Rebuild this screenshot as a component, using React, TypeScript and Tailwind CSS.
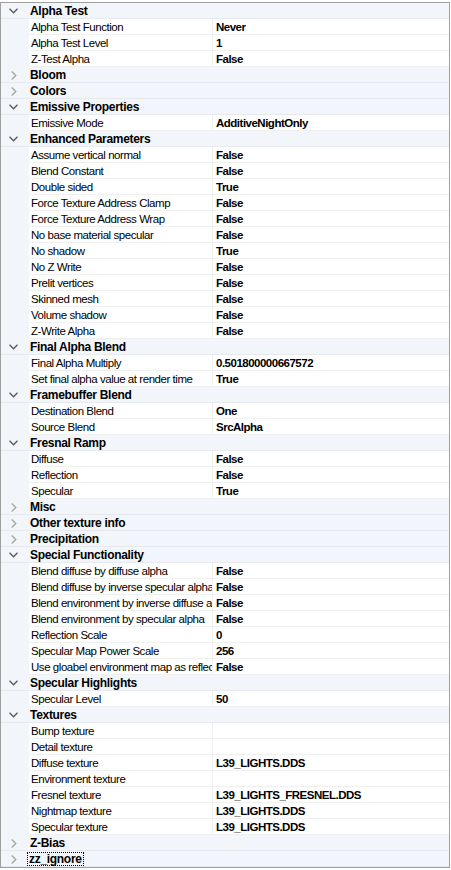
type Prop = [string, string];
type Cat = { name: string; open: boolean; props?: Prop[]; focus?: boolean };

const cats: Cat[] = [
  {
    name: "Alpha Test",
    open: true,
    props: [
      ["Alpha Test Function", "Never"],
      ["Alpha Test Level", "1"],
      ["Z-Test Alpha", "False"],
    ],
  },
  { name: "Bloom", open: false },
  { name: "Colors", open: false },
  {
    name: "Emissive Properties",
    open: true,
    props: [["Emissive Mode", "AdditiveNightOnly"]],
  },
  {
    name: "Enhanced Parameters",
    open: true,
    props: [
      ["Assume vertical normal", "False"],
      ["Blend Constant", "False"],
      ["Double sided", "True"],
      ["Force Texture Address Clamp", "False"],
      ["Force Texture Address Wrap", "False"],
      ["No base material specular", "False"],
      ["No shadow", "True"],
      ["No Z Write", "False"],
      ["Prelit vertices", "False"],
      ["Skinned mesh", "False"],
      ["Volume shadow", "False"],
      ["Z-Write Alpha", "False"],
    ],
  },
  {
    name: "Final Alpha Blend",
    open: true,
    props: [
      ["Final Alpha Multiply", "0.501800000667572"],
      ["Set final alpha value at render time", "True"],
    ],
  },
  {
    name: "Framebuffer Blend",
    open: true,
    props: [
      ["Destination Blend", "One"],
      ["Source Blend", "SrcAlpha"],
    ],
  },
  {
    name: "Fresnal Ramp",
    open: true,
    props: [
      ["Diffuse", "False"],
      ["Reflection", "False"],
      ["Specular", "True"],
    ],
  },
  { name: "Misc", open: false },
  { name: "Other texture info", open: false },
  { name: "Precipitation", open: false },
  {
    name: "Special Functionality",
    open: true,
    props: [
      ["Blend diffuse by diffuse alpha", "False"],
      ["Blend diffuse by inverse specular alpha", "False"],
      ["Blend environment by inverse diffuse a", "False"],
      ["Blend environment by specular alpha", "False"],
      ["Reflection Scale", "0"],
      ["Specular Map Power Scale", "256"],
      ["Use gloabel environment map as reflec", "False"],
    ],
  },
  {
    name: "Specular Highlights",
    open: true,
    props: [["Specular Level", "50"]],
  },
  {
    name: "Textures",
    open: true,
    props: [
      ["Bump texture", ""],
      ["Detail texture", ""],
      ["Diffuse texture", "L39_LIGHTS.DDS"],
      ["Environment texture", ""],
      ["Fresnel texture", "L39_LIGHTS_FRESNEL.DDS"],
      ["Nightmap texture", "L39_LIGHTS.DDS"],
      ["Specular texture", "L39_LIGHTS.DDS"],
    ],
  },
  { name: "Z-Bias", open: false },
  { name: "zz_ignore", open: false, focus: true },
];

function Chevron({ open }: { open: boolean }) {
  return open ? (
    <svg width="9" height="6" viewBox="0 0 9 6" className="ml-[8px]">
      <polyline points="0.5,0.8 4.5,4.8 8.5,0.8" fill="none" stroke="#5a5a5a" strokeWidth="1.3" />
    </svg>
  ) : (
    <svg width="6" height="9" viewBox="0 0 6 9" className="ml-[10px]">
      <polyline points="0.8,0.5 4.8,4.5 0.8,8.5" fill="none" stroke="#a6a6a6" strokeWidth="1.3" />
    </svg>
  );
}

function CategoryRow({ cat }: { cat: Cat }) {
  return (
    <div className="flex h-4 items-center border-b border-[#e6eaf0] bg-[#f2f5fa] pt-px">
      <div className="flex w-[28px] shrink-0 items-center">
        <Chevron open={cat.open} />
      </div>
      <span
        className={
          cat.focus
            ? "ml-[-2px] border border-dotted border-black px-[1px] text-[12px] leading-[12px] font-bold tracking-[-0.3px]"
            : "ml-px text-[12px] font-bold tracking-[-0.3px]"
        }
      >
        {cat.name}
      </span>
    </div>
  );
}

function PropRow({ p }: { p: Prop }) {
  return (
    <div className="flex h-4 bg-[#f2f5fa]">
      <div className="w-[28px] shrink-0" />
      <div className="flex flex-1 border-b border-[#f0f0f0] bg-white">
        <div className="w-[184px] shrink-0 overflow-hidden whitespace-nowrap border-r border-[#f0f0f0] pl-[2px] pt-px leading-[15px] tracking-[-0.45px]">
          {p[0]}
        </div>
        <div className="flex-1 overflow-hidden whitespace-nowrap pl-[3px] pt-px font-bold leading-[15px] tracking-[-0.5px]">
          {p[1]}
        </div>
      </div>
    </div>
  );
}

export default function App() {
  return (
    <div className="h-[870px] w-[451px] bg-white pt-[2px] font-['Liberation_Sans',Arial,sans-serif] text-[11.5px] text-black">
      <div className="h-[866px] w-[450px] overflow-hidden border border-[#a0a0a0]">
        {cats.map((c) => (
          <div key={c.name}>
            <CategoryRow cat={c} />
            {c.open && c.props?.map((p) => <PropRow key={p[0]} p={p} />)}
          </div>
        ))}
      </div>
    </div>
  );
}
